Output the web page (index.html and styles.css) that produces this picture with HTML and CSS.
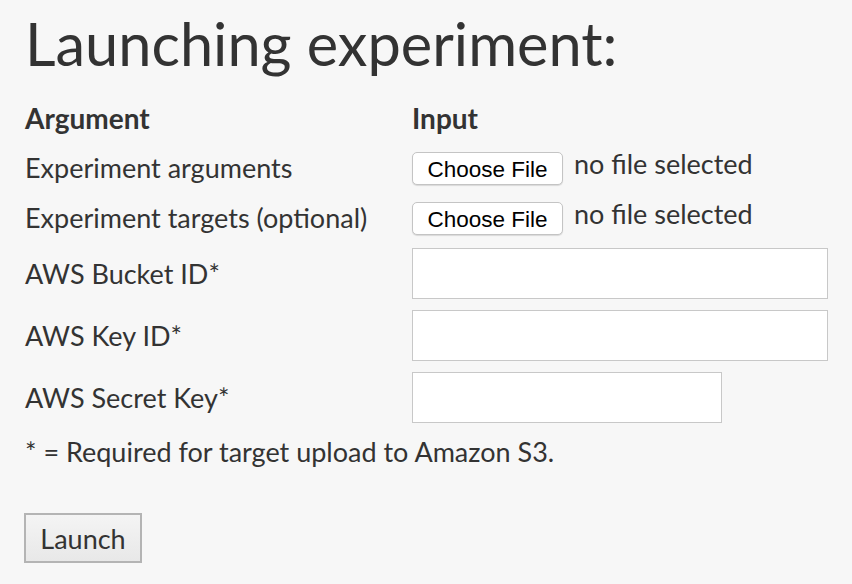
FILE: index.html
```html
<!DOCTYPE html>
<html>
<head>
<meta charset="utf-8">
<link rel="stylesheet" href="styles.css">
</head>
<body>
<main class="page">
  <h1 class="title">Launching experiment:</h1>
  <form class="form">
    <div class="grid">
      <div class="head">Argument</div>
      <div class="head">Input</div>

      <div class="label">Experiment arguments</div>
      <div class="file"><button type="button" class="file-btn">Choose File</button><span class="file-name">no file selected</span></div>

      <div class="label">Experiment targets (optional)</div>
      <div class="file"><button type="button" class="file-btn">Choose File</button><span class="file-name">no file selected</span></div>

      <div class="label">AWS Bucket ID*</div>
      <div><input class="text wide" type="text"></div>

      <div class="label">AWS Key ID*</div>
      <div><input class="text wide" type="text"></div>

      <div class="label">AWS Secret Key*</div>
      <div><input class="text narrow" type="password"></div>
    </div>
    <p class="note">* = Required for target upload to Amazon S3.</p>
    <button type="button" class="launch">Launch</button>
  </form>
</main>
</body>
</html>
```
FILE: styles.css
```css
html, body {
  margin: 0;
  padding: 0;
  background: #f7f7f7;
}
body {
  font-family: Lato, "Open Sans", sans-serif;
  color: #333333;
}
.page {
  padding: 0 24px 0 25px;
}
.title {
  margin: 0;
  padding-top: 9px;
  font-size: 59.5px;
  font-weight: 400;
  line-height: 68px;
  height: 89px;
}
.grid {
  display: grid;
  grid-template-columns: 387px 1fr;
  grid-template-rows: 39px 39px 39px 51px 51px 51px;
  row-gap: 11px;
  align-items: center;
}
.head {
  font-weight: 700;
  font-size: 28px;
}
.label {
  font-size: 27px;
}
.file {
  display: flex;
  align-items: center;
  gap: 11px;
}
.file-btn {
  font-family: "Liberation Sans", Arial, sans-serif;
  font-size: 22.5px;
  color: #000;
  background: #fff;
  border: 1px solid #c4c4c4;
  border-radius: 5px;
  box-shadow: 0 1px 1px rgba(0,0,0,0.12);
  height: 33px;
  width: 151px;
  padding: 3px 0 0;
  margin-top: 1px;
}
.file-name {
  font-size: 27px;
  position: relative;
  top: -4px;
}
.text {
  display: block;
  box-sizing: border-box;
  height: 51px;
  border: 1px solid #c8c8c8;
  background: #fff;
  margin: 0;
}
.wide {
  width: 416px;
}
.narrow {
  width: 310px;
}
.note {
  margin: 14px 0 0;
  font-size: 27px;
  line-height: 30px;
}
.launch {
  margin-top: 46px;
  margin-left: -1px;
  width: 118px;
  height: 50px;
  font-family: Lato, sans-serif;
  font-size: 27px;
  color: #333;
  background: linear-gradient(#f4f4f4, #e8e8e8);
  border: 2px solid #b4b4b4;
  border-radius: 0;
  padding: 0;
}
```
